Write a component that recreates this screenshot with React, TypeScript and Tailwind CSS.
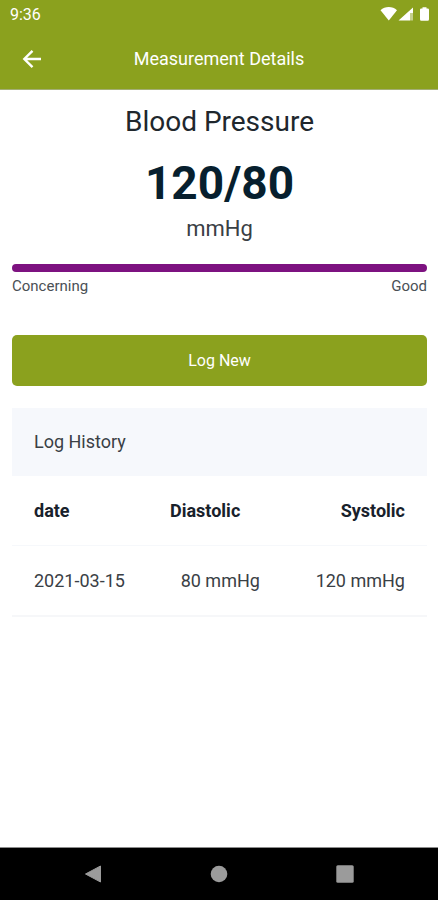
import React from "react";

interface LogEntry {
  date: string;
  diastolic: number;
  systolic: number;
}

const UNIT = "mmHg";

const entries: LogEntry[] = [
  { date: "2021-03-15", diastolic: 80, systolic: 120 },
];

// Android status bar: clock and system icons
function StatusBar() {
  return (
    <div className="flex h-7 items-center justify-between pl-[10px] pr-2 text-white">
      <span className="pt-px text-base leading-7">9:36</span>
      <svg width="50" height="16" viewBox="0 0 50 16" fill="currentColor" aria-hidden="true">
        <path d="M0.5 4.2C5 0 12.5 0 17 4.2L8.8 14.5Z" />
        <path d="M33 1.5V7H30.5V14.5H18.5Z" />
        <path d="M31 7H33V14.5H31Z" fillOpacity="0.5" />
        <path d="M42.5 1.2h4v1.3h1.2q1.3 0 1.3 1.3v9.4q0 1.5-1.3 1.5h-6.4q-1.3 0-1.3-1.5V3.8q0-1.3 1.3-1.3h1.2Z" />
      </svg>
    </div>
  );
}

function Header({ title }: { title: string }) {
  return (
    <header className="border-b border-[#a3ae74] bg-[#8ba11e]">
      <StatusBar />
      <div className="grid h-[61px] grid-cols-[40px_1fr_40px] items-center px-3 text-white">
        <button type="button" aria-label="Back" className="flex h-10 w-10 items-center justify-center">
          <svg width="20" height="20" viewBox="0 0 20 20" fill="none" stroke="currentColor" strokeWidth="2.4" aria-hidden="true">
            <path d="M19 10H2.5M10.5 1.8L2.3 10L10.5 18.2" />
          </svg>
        </button>
        <h1 className="text-center text-lg">{title}</h1>
      </div>
    </header>
  );
}

function LogHistory() {
  return (
    <section className="mt-[22px]">
      <h2 id="log-history" className="bg-[#f6f8fc] px-[22px] py-5 text-lg text-[#3a4045]">
        Log History
      </h2>
      <table aria-labelledby="log-history" className="block text-lg">
        <thead className="block">
          <tr className="flex h-[70px] items-center justify-between border-b border-[#f6f8fb] px-[22px] text-[#18212b]">
            <th className="p-0 font-bold">date</th>
            <th className="p-0 font-bold">Diastolic</th>
            <th className="p-0 font-bold">Systolic</th>
          </tr>
        </thead>
        <tbody className="block">
          {entries.map(entry => (
            <tr
              key={entry.date}
              className="flex h-[71px] items-center justify-between border-b-2 border-[#f6f7f9] px-[22px] text-[#3a4045]"
            >
              <td className="p-0">{entry.date}</td>
              <td className="p-0">{entry.diastolic} {UNIT}</td>
              <td className="p-0">{entry.systolic} {UNIT}</td>
            </tr>
          ))}
        </tbody>
      </table>
    </section>
  );
}

// Android navigation buttons
function NavBar() {
  return (
    <nav className="grid h-[53px] grid-cols-3 items-center border-t border-[#8c8c8c] bg-black px-[30px] text-[#9b9b9b]">
      <button type="button" aria-label="Back" className="flex justify-center">
        <svg width="18" height="18" viewBox="0 0 18 18" fill="currentColor" stroke="currentColor" strokeLinejoin="round" aria-hidden="true">
          <path d="M16.5 1V17L1.5 9Z" />
        </svg>
      </button>
      <button type="button" aria-label="Home" className="flex justify-center">
        <svg width="18" height="18" viewBox="0 0 18 18" fill="currentColor" aria-hidden="true">
          <circle cx="9" cy="9" r="8.3" />
        </svg>
      </button>
      <button type="button" aria-label="Recent apps" className="flex justify-center">
        <svg width="18" height="18" viewBox="0 0 18 18" fill="currentColor" aria-hidden="true">
          <rect x="0.3" y="0.3" width="17.4" height="17.4" rx="1.5" />
        </svg>
      </button>
    </nav>
  );
}

export default function App() {
  const latest = entries[0];

  return (
    <div className="flex min-h-screen flex-col bg-white font-[Roboto,sans-serif]">
      <Header title="Measurement Details" />
      <main className="flex-1 pl-3 pr-[11px]">
        <div className="pt-3 text-center text-[#20272d]">
          <h2 className="text-[28px] leading-10">Blood Pressure</h2>
          <p className="mt-3 text-[46px] leading-[58px] font-bold text-[#071f2e]">
            {latest.systolic}/{latest.diastolic}
          </p>
          <p className="mt-[3px] text-[22px] leading-7 text-[#3a4045]">{UNIT}</p>
        </div>

        {/* Range scale */}
        <div className="mt-[21px] h-2 rounded-full bg-[#7d1280]" />
        <div className="mt-1 flex justify-between text-[15px] leading-5 text-[#4a5055]">
          <span>Concerning</span>
          <span>Good</span>
        </div>

        <button
          type="button"
          className="mt-[39px] h-[51px] w-full rounded-[5px] bg-[#8ba11e] text-base text-white"
        >
          Log New
        </button>

        <LogHistory />
      </main>
      <NavBar />
    </div>
  );
}
